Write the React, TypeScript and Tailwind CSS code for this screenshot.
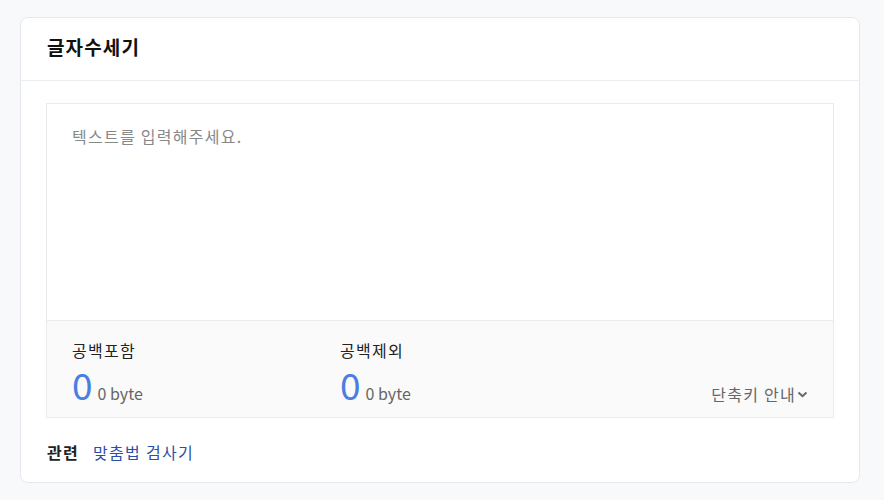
const font = { fontFamily: '"Noto Sans CJK KR", "Noto Sans", sans-serif' }

function Stat({ label }: { label: string }) {
  return (
    <div className="w-[268px]">
      <div className="text-[16px] leading-[22px] tracking-[0.08em] text-[#222]">{label}</div>
      <div className="flex items-baseline mt-[3px]">
        <span className="text-[37px] leading-[40px] text-[#4a7ee3]">0</span>
        <span className="ml-[5px] text-[16px] text-[#666]">0 byte</span>
      </div>
    </div>
  )
}

export default function App() {
  return (
    <div className="min-h-[500px] bg-[#f8f9fb] px-[20px] pt-[17px] pb-[17px]" style={font}>
      <div className="bg-white border border-[#e6e8eb] rounded-[8px] w-[840px]">
        <div className="h-[63px] flex items-center px-[26px] pb-[4px] border-b border-[#ebedf0]">
          <h1 className="text-[19px] font-bold tracking-[0.06em] text-[#111]">글자수세기</h1>
        </div>
        <div className="px-[25px] pt-[22px]">
          <div className="border border-[#ebebeb]">
            <textarea
              className="block w-full h-[216px] resize-none outline-none px-[25px] pt-[20px] text-[16px] leading-[24px] tracking-[0.08em] text-[#333] placeholder:text-[#888]"
              placeholder="텍스트를 입력해주세요."
              style={font}
            />
            <div className="border-t border-[#ebebeb] bg-[#fafafa] h-[97px] px-[25px] pt-[18px] flex">
              <Stat label="공백포함" />
              <Stat label="공백제외" />
              <div className="ml-auto self-end pb-[11px] flex items-center text-[16px] tracking-[0.08em] text-[#666]">
                단축키 안내
                <svg width="11" height="7" viewBox="0 0 11 7" className="ml-[1px] mt-[1px]">
                  <polyline points="1.5,1.5 5.5,5.2 9.5,1.5" fill="none" stroke="#666" strokeWidth="2" />
                </svg>
              </div>
            </div>
          </div>
        </div>
        <div className="px-[26px] h-[64px] flex items-center pt-[3px] text-[16px] tracking-[0.08em]">
          <span className="font-bold text-[#222]">관련</span>
          <a className="ml-[14px] text-[#2d4fa8]" href="#">맞춤법 검사기</a>
        </div>
      </div>
    </div>
  )
}
